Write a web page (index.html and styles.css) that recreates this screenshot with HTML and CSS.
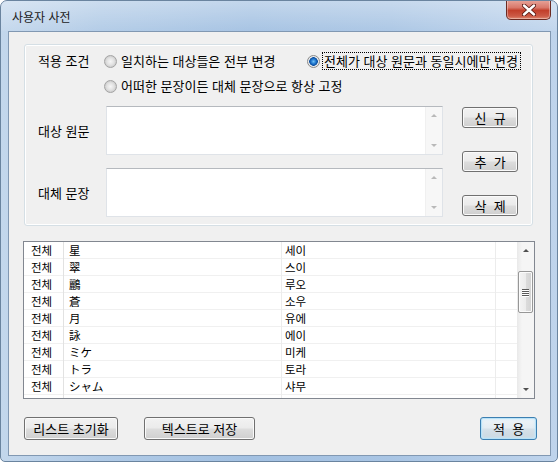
FILE: index.html
```html
<!DOCTYPE html>
<html lang="ko">
<head>
    <meta charset="UTF-8">
    <title>사용자 사전</title>
    <link rel="stylesheet" href="styles.css">
</head>
<body>
    <div class="window">
        <div class="titlebar">
            <span class="title">사용자 사전</span>
            <span class="close">
                <svg width="14" height="12" viewBox="0 0 14 12">
                    <path d="M2 1.5 L12 10.5 M12 1.5 L2 10.5" stroke="#5a1a14" stroke-width="4.2" stroke-linecap="round"/>
                    <path d="M2 1.5 L12 10.5 M12 1.5 L2 10.5" stroke="#fff" stroke-width="2.4" stroke-linecap="round"/>
                </svg>
            </span>
        </div>

        <div class="client">
            <!-- options and editing -->
            <div class="panel">
                <div class="cond">
                    <span class="cond-label">적용 조건</span>
                    <div class="options">
                        <div class="opt-row">
                            <label class="radio opt-first"><span class="dot"></span>일치하는 대상들은 전부 변경</label>
                            <label class="radio checked"><span class="dot"></span><span class="focus">전체가 대상 원문과 동일시에만 변경</span></label>
                        </div>
                        <div class="opt-row">
                            <label class="radio"><span class="dot"></span>어떠한 문장이든 대체 문장으로 항상 고정</label>
                        </div>
                    </div>
                </div>

                <div class="editors">
                    <div class="fields">
                        <div class="field">
                            <span class="field-label">대상 원문</span>
                            <div class="memo">
                                <div class="memo-scroll">
                                    <span class="arrow up"></span>
                                    <span class="arrow down"></span>
                                </div>
                            </div>
                        </div>
                        <div class="field">
                            <span class="field-label">대체 문장</span>
                            <div class="memo">
                                <div class="memo-scroll">
                                    <span class="arrow up"></span>
                                    <span class="arrow down"></span>
                                </div>
                            </div>
                        </div>
                    </div>
                    <div class="side-buttons">
                        <button class="btn side">신&nbsp;&nbsp;규</button>
                        <button class="btn side">추&nbsp;&nbsp;가</button>
                        <button class="btn side">삭&nbsp;&nbsp;제</button>
                    </div>
                </div>
            </div>

            <!-- dictionary list -->
            <div class="list">
                <div class="rows">
                    <div class="row"><span>전체</span><span>星</span><span>세이</span><span></span></div>
                    <div class="row"><span>전체</span><span>翠</span><span>스이</span><span></span></div>
                    <div class="row"><span>전체</span><span>鸝</span><span>루오</span><span></span></div>
                    <div class="row"><span>전체</span><span>蒼</span><span>소우</span><span></span></div>
                    <div class="row"><span>전체</span><span>月</span><span>유에</span><span></span></div>
                    <div class="row"><span>전체</span><span>詠</span><span>에이</span><span></span></div>
                    <div class="row"><span>전체</span><span>ミケ</span><span>미케</span><span></span></div>
                    <div class="row"><span>전체</span><span>トラ</span><span>토라</span><span></span></div>
                    <div class="row"><span>전체</span><span>シャム</span><span>샤무</span><span></span></div>
                    <div class="row"><span></span><span></span><span></span><span></span></div>
                </div>
                <div class="vscroll">
                    <span class="arrow up dark"></span>
                    <span class="thumb"><i></i><i></i><i></i><i></i></span>
                    <span class="arrow down dark"></span>
                </div>
            </div>

            <div class="footer">
                <button class="btn reset">리스트 초기화</button>
                <button class="btn save">텍스트로 저장</button>
                <button class="btn apply">적&nbsp;&nbsp;용</button>
            </div>
        </div>
    </div>
</body>
</html>
```

FILE: styles.css
```css
* {
    box-sizing: border-box;
}
body {
    margin: 0;
    width: 558px;
    height: 462px;
    overflow: hidden;
    background: #fff;
    font-family: "Noto Sans CJK KR", "Noto Sans", sans-serif;
    font-size: 13px;
    color: #000;
}
.window {
    width: 558px;
    height: 462px;
    border: 1px solid #6a849f;
    border-radius: 7px 7px 5px 5px;
    background: linear-gradient(90deg, #c3d7ec 0%, #b0cae6 18%, #a3c1e2 45%, #a9c5e4 70%, #bfd4ec 100%);
    display: flex;
    flex-direction: column;
    overflow: hidden;
}
.titlebar {
    height: 30px;
    position: relative;
    display: flex;
    align-items: center;
    padding-left: 11px;
    background: linear-gradient(rgba(255,255,255,0.35), rgba(255,255,255,0.05));
}
.title {
    font-size: 12px;
    color: #1a1a1a;
    margin-top: 1px;
}
.close {
    position: absolute;
    top: -1px;
    right: 6px;
    width: 45px;
    height: 20px;
    border: 1px solid #6b2a22;
    border-top: none;
    border-radius: 0 0 5px 5px;
    background: linear-gradient(#e8a69c 0%, #d9786a 40%, #c23f2b 55%, #cc5a46 85%, #e08a73 100%);
    box-shadow: inset 0 0 0 1px rgba(255,255,255,0.35);
    display: flex;
    align-items: center;
    justify-content: center;
}
.client {
    flex: 1;
    margin: 0 6px 5px 7px;
    border: 1px solid #8198b2;
    background: #f0f0f0;
    padding: 12px 14px 0 14px;
}

/* group box */
.panel {
    margin-left: 1px;
    width: 509px;
    height: 182px;
    border: 1px solid #d5dfe5;
    border-radius: 3px;
    box-shadow: inset 0 0 0 1px #fff;
    padding: 8px 0 0 13px;
}
.cond {
    display: flex;
}
.cond-label {
    width: 66px;
    line-height: 16px;
}
.opt-row {
    display: flex;
    height: 16px;
    align-items: center;
}
.opt-row + .opt-row {
    margin-top: 9px;
}
.radio {
    display: flex;
    align-items: center;
    line-height: 16px;
    white-space: nowrap;
}
.opt-first {
    width: 203px;
}
.dot {
    width: 13px;
    height: 13px;
    border-radius: 50%;
    border: 1px solid #a3a3a3;
    background: radial-gradient(circle, #f6f6f6 0, #e2e2e2 45%, #cfcfcf 70%, #eeeeee 100%);
    margin-right: 4px;
    flex: none;
}
.checked .dot {
    border-color: #8a8a8a;
    background: radial-gradient(circle, #6fc1f5 0, #1e74cc 2.5px, #0d4f9e 4px, #f2f2f2 4.6px, #dcdcdc 6px);
}
.focus {
    outline: 1px dotted #000;
    padding: 0 2px 0 1px;
    margin-left: -1px;
}

/* text inputs */
.editors {
    display: flex;
    margin-top: 12px;
}
.fields {
    display: flex;
    flex-direction: column;
    gap: 13px;
}
.field {
    display: flex;
    align-items: center;
}
.field-label {
    width: 68px;
}
.memo {
    width: 337px;
    height: 49px;
    border: 1px solid #dfe3e8;
    border-top-color: #b5b9be;
    background: #fff;
    display: flex;
    justify-content: flex-end;
}
.memo-scroll {
    width: 17px;
    background: #f7f7f7;
    border-left: 1px solid #f0f0f0;
    display: flex;
    flex-direction: column;
    justify-content: space-between;
}
.arrow {
    height: 17px;
    display: flex;
    align-items: center;
    justify-content: center;
}
.arrow::before {
    content: "";
    border-left: 3px solid transparent;
    border-right: 3px solid transparent;
}
.arrow.up::before {
    border-bottom: 3px solid #b9b9b9;
}
.arrow.down::before {
    border-top: 3px solid #b9b9b9;
}
.arrow.dark.up::before {
    border-bottom-color: #4f4f4f;
}
.arrow.dark.down::before {
    border-top-color: #4f4f4f;
}
.side-buttons {
    margin-left: 19px;
    padding: 1px 0;
    display: flex;
    flex-direction: column;
    justify-content: space-between;
}

/* buttons */
.btn {
    font-family: "Noto Sans CJK KR", "Noto Sans", sans-serif;
    font-size: 13px;
    color: #000;
    border: 1px solid #707070;
    border-radius: 3px;
    background: linear-gradient(#f2f2f2 0%, #ebebeb 48%, #dddddd 52%, #cfcfcf 100%);
    box-shadow: inset 0 0 0 1px #fafafa;
    padding: 0;
    line-height: 1;
}
.btn.side {
    width: 56px;
    height: 21px;
}

/* list view */
.list {
    margin-top: 15px;
    width: 512px;
    height: 158px;
    border: 1px solid #828790;
    background: #fff;
    display: flex;
}
.rows {
    flex: 1;
    overflow: hidden;
}
.row {
    display: grid;
    grid-template-columns: 40px 218px 214px 1fr;
    height: 17px;
    line-height: 17px;
    font-size: 11.5px;
    background: linear-gradient(to top, #f0f0f0 1px, transparent 1px);
}
.row span {
    border-right: 1px solid #ececec;
    white-space: nowrap;
}
.row span:nth-child(1) {
    padding-left: 7px;
    border-right-color: #e2e2e2;
}
.row span:nth-child(2) {
    padding-left: 5px;
}
.row span:nth-child(3) {
    padding-left: 3px;
}
.row span:nth-child(4) {
    border-right: none;
}
.vscroll {
    width: 17px;
    background: linear-gradient(90deg, #e9e9e9, #f5f5f5 30%, #f5f5f5);
    display: flex;
    flex-direction: column;
}
.vscroll .down {
    margin-top: auto;
}
.thumb {
    margin: 12px 1px 0 1px;
    height: 42px;
    border: 1px solid #979797;
    border-radius: 2px;
    background: linear-gradient(90deg, #f4f4f4 0%, #ececec 50%, #dcdcdc 51%, #d2d2d2 100%);
    box-shadow: inset 0 0 0 1px #fbfbfb;
    display: flex;
    flex-direction: column;
    align-items: center;
    justify-content: center;
    gap: 1px;
}
.thumb i {
    width: 7px;
    height: 1px;
    background: #5a5a5a;
    box-shadow: 0 1px 0 #fff;
}

/* bottom bar */
.footer {
    display: flex;
    margin-top: 18px;
    padding-left: 1px;
}
.footer .btn {
    height: 23px;
}
.reset {
    width: 94px;
}
.save {
    width: 111px;
    margin-left: 26px;
}
.apply {
    width: 57px;
    margin-left: auto;
    margin-right: -1px;
    border-color: #3c7fb1;
    box-shadow: inset 0 0 0 1px #b8e2f8, inset 0 0 3px 1px #cdeafa;
    background: linear-gradient(#eef4f8 0%, #e4ecf2 48%, #d6e1e9 52%, #cbd7e0 100%);
}
```
